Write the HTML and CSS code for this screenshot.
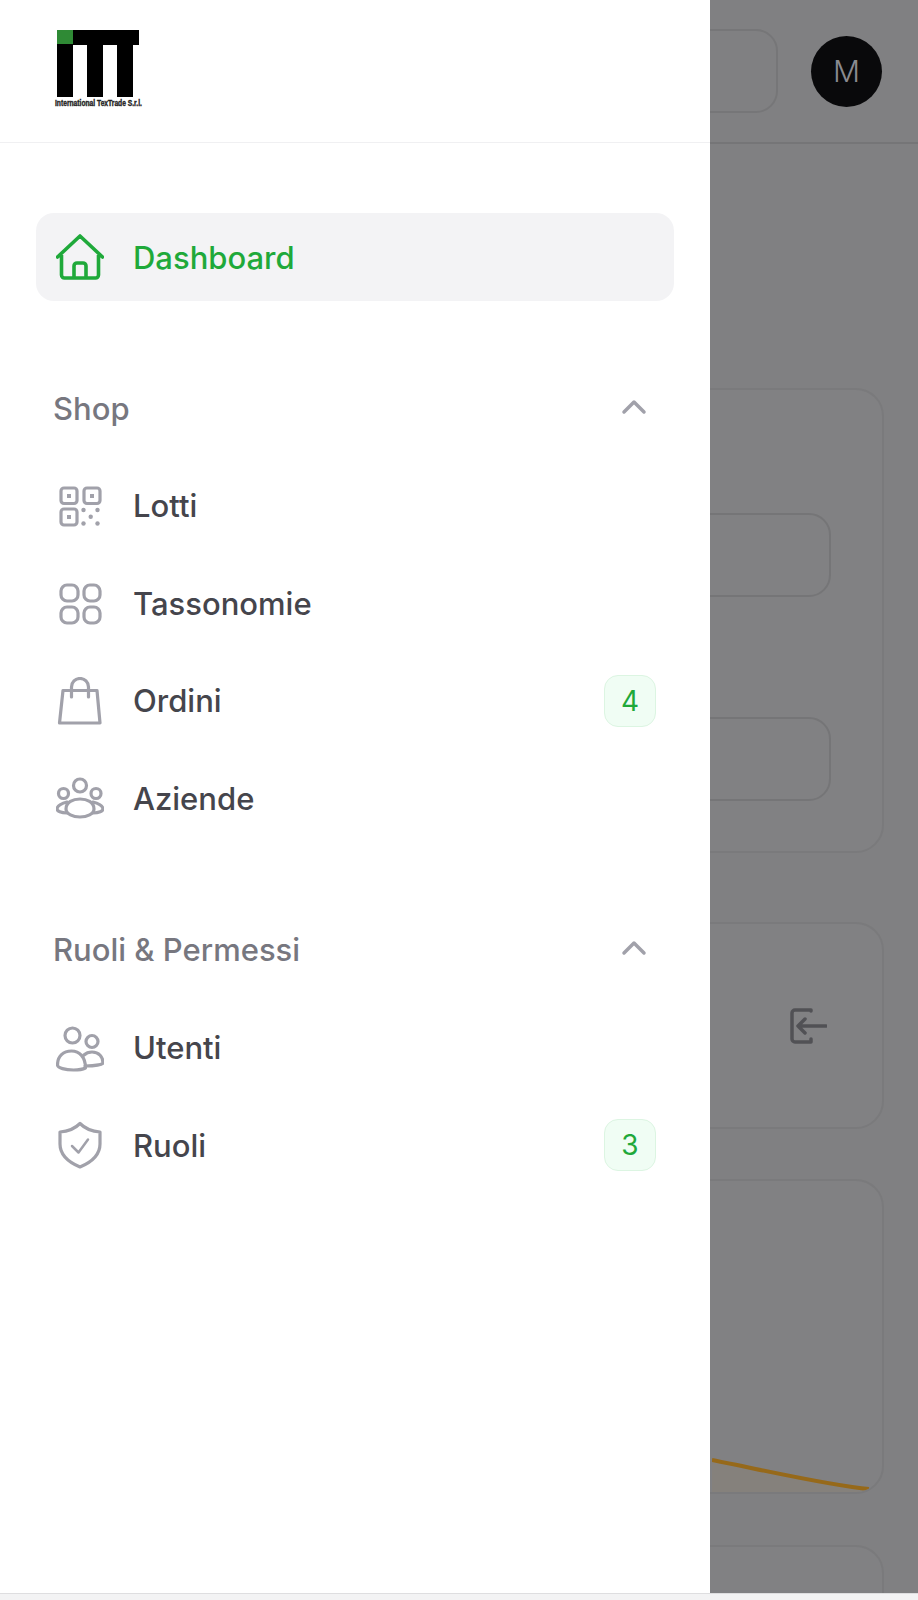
FILE: index.html
```html
<!DOCTYPE html>
<html lang="en">
  <head>
    <meta charset="UTF-8" />
    <title>Dashboard</title>
    <link rel="stylesheet" href="styles.css">
  </head>
  <body>
    <div class="page">
      <aside class="sidebar">
        <div class="sidebar-head">
          <svg class="logo" width="92" height="80" viewBox="0 0 92 80">
            <rect x="3" y="2" width="82" height="15" fill="#000"/>
            <rect x="3" y="2" width="16" height="67" fill="#000"/>
            <rect x="33" y="2" width="16" height="67" fill="#000"/>
            <rect x="63" y="2" width="16" height="67" fill="#000"/>
            <rect x="3" y="2" width="16" height="14" fill="#2f8a35"/>
            <text class="logo-text" transform="translate(1 78) scale(1 1.25)">International TexTrade S.r.l.</text>
          </svg>
        </div>
        <nav class="nav">
          <a class="item active">
            <svg class="icon" width="48" height="48" viewBox="0 0 48 48"><path d="M1.500 24 24 3l22.500 21M5.500 20.500V42a3 3 0 0 0 3 3h31a3 3 0 0 0 3-3V20.500M18 45V33a3 3 0 0 1 3-3h6a3 3 0 0 1 3 3v12"/></svg>
            <span>Dashboard</span>
          </a>

          <div class="section">
            <span>Shop</span>
            <svg class="chevron" width="26" height="16" viewBox="0 0 26 16"><path d="M3 13 13 3l10 10"/></svg>
          </div>
          <div class="items">
            <a class="item">
              <svg class="icon" width="48" height="48" viewBox="0 0 48 48">
                <rect x="5" y="6" width="16" height="15.500" rx="3"/>
                <rect x="28" y="6" width="16" height="15.500" rx="3"/>
                <rect x="5" y="27" width="16" height="16" rx="3"/>
                <g class="solid">
                  <rect x="11" y="12" width="4" height="4"/>
                  <rect x="34" y="12" width="4" height="4"/>
                  <rect x="11" y="33" width="4" height="4"/>
                  <circle cx="27.500" cy="28" r="2.200"/>
                  <circle cx="41.500" cy="28" r="2.200"/>
                  <circle cx="34.700" cy="34.700" r="2.200"/>
                  <circle cx="27.500" cy="41.500" r="2.200"/>
                  <circle cx="41.500" cy="41.500" r="2.200"/>
                </g>
              </svg>
              <span>Lotti</span>
            </a>
            <a class="item">
              <svg class="icon" width="48" height="48" viewBox="0 0 48 48">
                <rect x="5" y="6" width="17" height="16" rx="6"/>
                <rect x="28" y="6" width="16" height="16" rx="6"/>
                <rect x="5" y="28" width="17" height="16" rx="6"/>
                <rect x="28" y="28" width="16" height="16" rx="6"/>
              </svg>
              <span>Tassonomie</span>
            </a>
            <a class="item">
              <svg class="icon" width="48" height="48" viewBox="0 0 48 48"><path d="M7 13.500h34l3 32.500H3.500ZM15.500 20V10a8.500 8.500 0 0 1 17 0v10"/></svg>
              <span>Ordini</span>
              <b class="badge">4</b>
            </a>
            <a class="item">
              <svg class="icon" width="48" height="48" viewBox="0 0 48 48">
                <circle cx="24" cy="11.500" r="6.500"/>
                <circle cx="7.500" cy="19.500" r="5"/>
                <circle cx="40" cy="19.500" r="5"/>
                <path d="M10 35c0-7 7-10 14-10s14 3 14 10c0 5-7 8-14 8s-14-3-14-8Z"/>
                <path d="M11 28c-5 1-10 4-10 7 0 2 4 4 10 4M37 28c5 1 10 4 10 7 0 2-4 4-10 4"/>
              </svg>
              <span>Aziende</span>
            </a>
          </div>

          <div class="section">
            <span>Ruoli &amp; Permessi</span>
            <svg class="chevron" width="26" height="16" viewBox="0 0 26 16"><path d="M3 13 13 3l10 10"/></svg>
          </div>
          <div class="items">
            <a class="item">
              <svg class="icon" width="48" height="48" viewBox="0 0 48 48">
                <circle cx="16.500" cy="11.500" r="7.500"/>
                <circle cx="36" cy="17.500" r="6"/>
                <path d="M1.500 41c0-9 6-14 14-14s14 6 14 17c-2 1-6 2-12 2-8 0-16-2-16-5Z"/>
                <path d="M28 31c2-2 5-3 8-3 7 0 11 5 11 11 0 1-6 3-18 3"/>
              </svg>
              <span>Utenti</span>
            </a>
            <a class="item">
              <svg class="icon" width="48" height="48" viewBox="0 0 48 48">
                <path d="M24 2.500c5 5 12 8 20 8.500v12c0 11-8 18-20 23C12 41 4 34 4 23V11c8-.5 15-3.500 20-8.500Z"/>
                <path class="thin" d="m16 25 6.500 6.500L32 18.500"/>
              </svg>
              <span>Ruoli</span>
              <b class="badge">3</b>
            </a>
          </div>
        </nav>
      </aside>

      <main class="behind">
        <header class="topbar">
          <div class="top-box"></div>
          <div class="avatar">M</div>
        </header>
        <div class="content">
          <div class="card card-form">
            <div class="field"></div>
            <div class="field"></div>
          </div>
          <div class="card card-action">
            <svg width="38" height="38" viewBox="0 0 38 38"><path d="M22 4V3H6a3 3 0 0 0-3 3v26a3 3 0 0 0 3 3h16v-3M37 19H9M16 12l-7 7 7 7"/></svg>
          </div>
          <div class="card card-chart">
            <svg width="208" height="36" viewBox="0 0 208 36">
              <path class="area" d="M0 4C60 16 120 30 157 33V36H0Z"/>
              <path class="line" d="M0 4C60 16 120 30 157 33"/>
            </svg>
          </div>
          <div class="card card-last"></div>
        </div>
      </main>
    </div>
    <div class="strip"></div>
  </body>
</html>
```

FILE: styles.css
```css
body {
  font-family: Inter, 'Liberation Sans', sans-serif;
  background: #fff;
  margin: 0;
  height: 1600px;
  overflow: hidden;
}
.page {
  display: flex;
  height: 1593px;
}
.sidebar {
  width: 710px;
  flex-shrink: 0;
  background: #fff;
}
.sidebar-head {
  height: 143px;
  box-sizing: border-box;
  border-bottom: 1px solid #f0f0f2;
  padding: 28px 0 0 54px;
}
.logo {
  display: block;
}
.logo-text {
  font-family: 'Liberation Sans', sans-serif;
  font-size: 6.700px;
  font-weight: 700;
  fill: #222;
  stroke: #222;
  stroke-width: 0.3;
}
.nav {
  padding: 70px 36px 0 36px;
}
.item {
  display: flex;
  align-items: center;
  height: 87.500px;
  padding: 0 18px 0 20px;
  font-size: 31px;
  font-weight: 500;
  color: #45454c;
}
.item span {
  margin-left: 29px;
  flex: 1;
}
.item.active {
  background: #f3f3f5;
  border-radius: 18px;
  color: #1fa93a;
  height: 88px;
}
.icon {
  flex-shrink: 0;
  fill: none;
  stroke: #a1a1aa;
  stroke-width: 3.200;
  stroke-linecap: round;
  stroke-linejoin: round;
}
.icon .solid {
  fill: #a1a1aa;
  stroke: none;
}
.icon .thin {
  stroke-width: 2.500;
}
.active .icon {
  stroke: #1fa93a;
  stroke-width: 3.600;
}
.section {
  display: flex;
  align-items: center;
  justify-content: space-between;
  height: 48px;
  margin-top: 83px;
  padding: 0 27px 0 17px;
  font-size: 31px;
  font-weight: 500;
  color: #77777f;
}
.chevron {
  fill: none;
  stroke: #a1a1aa;
  stroke-width: 3.500;
  stroke-linecap: round;
  stroke-linejoin: round;
  margin-top: -3px;
}
.items {
  display: flex;
  flex-direction: column;
  gap: 10px;
  margin-top: 30px;
}
.items:last-child {
  margin-top: 31px;
}
.badge {
  width: 52px;
  height: 52px;
  box-sizing: border-box;
  display: flex;
  align-items: center;
  justify-content: center;
  background: #f0fdf4;
  border: 1.500px solid #dcf5e2;
  border-radius: 14px;
  font-size: 28px;
  font-weight: 400;
  color: #1fa93a;
}
.behind {
  flex: 1;
  min-width: 0;
  overflow: hidden;
  background: #808082;
}
.topbar {
  height: 144px;
  box-sizing: border-box;
  border-bottom: 2px solid #757577;
  display: flex;
  align-items: center;
  justify-content: flex-end;
  gap: 33px;
  padding: 0 36px 0 0;
}
.top-box {
  width: 100px;
  height: 84px;
  flex-shrink: 0;
  box-sizing: border-box;
  border: 2px solid #767678;
  border-radius: 22px;
  margin-top: -1px;
}
.avatar {
  width: 71px;
  height: 71px;
  flex-shrink: 0;
  border-radius: 50%;
  background: #09090b;
  color: #8a8a90;
  font-size: 30px;
  font-weight: 300;
  display: flex;
  align-items: center;
  justify-content: center;
}
.content {
  padding: 244px 34px 0 0;
}
.card {
  box-sizing: border-box;
  margin-left: -40px;
  border: 2px solid #7a7a7c;
  border-radius: 28px;
  background: #818183;
}
.card-form {
  height: 465px;
  padding: 123px 51px 0 0;
  margin-bottom: 69px;
}
.field {
  height: 84px;
  margin-bottom: 120px;
  margin-left: -4px;
  box-sizing: border-box;
  border: 2px solid #757577;
  border-radius: 22px;
}
.card-action {
  height: 207px;
  margin-bottom: 50px;
  display: flex;
  align-items: center;
  justify-content: flex-end;
  padding: 0 55px 0 0;
}
.card-action svg {
  fill: none;
  stroke: #515155;
  stroke-width: 3.500;
  stroke-linecap: round;
  stroke-linejoin: round;
}
.card-chart {
  height: 315px;
  margin-bottom: 51px;
  display: flex;
  align-items: flex-end;
  padding-left: 40px;
  overflow: hidden;
}
.card-chart svg {
  flex-shrink: 0;
  display: block;
}
.area {
  fill: #85817c;
}
.line {
  fill: none;
  stroke: #96691a;
  stroke-width: 4;
}
.card-last {
  height: 120px;
}
.strip {
  height: 7px;
  box-sizing: border-box;
  border-top: 1px solid #dedee0;
  background: #f3f3f4;
}
```
